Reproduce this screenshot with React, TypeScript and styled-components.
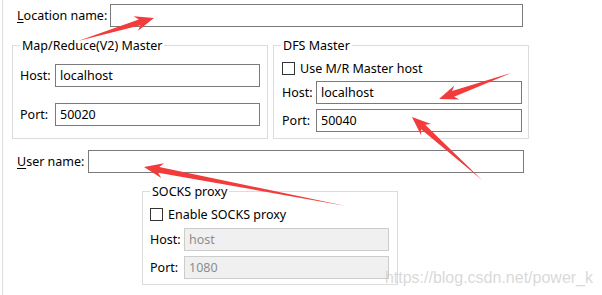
import React from 'react';
import styled, { createGlobalStyle } from "styled-components";

const GlobalStyle = createGlobalStyle`
  html, body { margin: 0; padding: 0; background: #fff; }
  body {
    font-family: "Noto Sans", "Open Sans", sans-serif;
    font-size: 12.5px;
    color: #000;
  }
`;

type Pt = [number, number];

// annotation arrow: thin tail widening into a notched head
function arrowPoints(tail: Pt, tip: Pt, head = 19, half = 7.5, shaft = 3) {
  const dx = tip[0] - tail[0];
  const dy = tip[1] - tail[1];
  const len = Math.hypot(dx, dy);
  const ux = dx / len, uy = dy / len;
  const nx = -uy, ny = ux;
  const at = (back: number, side: number): string =>
    `${(tip[0] - ux * back + nx * side).toFixed(1)},${(tip[1] - uy * back + ny * side).toFixed(1)}`;
  return [
    `${tail[0]},${tail[1]}`,
    at(head - 4, shaft),
    at(head, half),
    `${tip[0]},${tip[1]}`,
    at(head, -half),
    at(head - 4, -shaft),
  ].join(" ");
}

const arrows: { tail: Pt; tip: Pt }[] = [
  { tail: [78, 41], tip: [154, 18] },
  { tail: [511, 73], tip: [439, 99] },
  { tail: [482, 180], tip: [412, 117] },
  { tail: [346, 206], tip: [144, 167] },
];

function App() {
  return (
    <>
      <GlobalStyle />
      <Page>
        <Frame>
          <FieldRow $top={4}>
            <Label $w={93}><u>L</u>ocation name:</Label>
            <Input $w={413} />
          </FieldRow>

          <GroupRow>
            <Group>
              <Legend>Map/Reduce(V2) Master</Legend>
              <GroupBody $pad={7} $top={10} $gap={16}>
                <FieldRow>
                  <Label $w={35}>Host:</Label>
                  <Input $w={205} defaultValue="localhost" />
                </FieldRow>
                <FieldRow>
                  <Label $w={35}>Port:</Label>
                  <Input $w={205} defaultValue="50020" />
                </FieldRow>
              </GroupBody>
            </Group>
            <Group>
              <Legend>DFS Master</Legend>
              <GroupBody $pad={8} $top={8} $gap={5}>
                <CheckRow>
                  <Box />
                  <span>Use M/R Master host</span>
                </CheckRow>
                <FieldRow $top={1}>
                  <Label $w={34}>Host:</Label>
                  <Input $w={206} defaultValue="localhost" />
                </FieldRow>
                <FieldRow>
                  <Label $w={34}>Port:</Label>
                  <Input $w={206} defaultValue="50040" />
                </FieldRow>
              </GroupBody>
            </Group>
          </GroupRow>

          <FieldRow $top={11}>
            <Label $w={71}><u>U</u>ser name:</Label>
            <Input $w={436} />
          </FieldRow>

          <SocksRow>
            <Group>
              <Legend>SOCKS proxy</Legend>
              <GroupBody $pad={7} $top={8} $gap={5}>
                <CheckRow>
                  <Box />
                  <span>Enable SOCKS proxy</span>
                </CheckRow>
                <FieldRow $top={2}>
                  <Label $w={34}>Host:</Label>
                  <Input $w={205} $off defaultValue="host" disabled />
                </FieldRow>
                <FieldRow>
                  <Label $w={34}>Port:</Label>
                  <Input $w={205} $off defaultValue="1080" disabled />
                </FieldRow>
              </GroupBody>
            </Group>
          </SocksRow>
        </Frame>

        <Overlay width={602} height={295}>
          {arrows.map((a, i) => (
            <polygon key={i} points={arrowPoints(a.tail, a.tip)} fill="#f23c3c" />
          ))}
        </Overlay>
        <Watermark>https://blog.csdn.net/power_k</Watermark>
      </Page>
    </>
  );
}

export default App;

const Page = styled.div`
  position: relative;
  width: 602px;
  height: 295px;
  overflow: hidden;
`;

const Frame = styled.div`
  margin-left: 2px;
  height: 295px;
  border-left: 1px solid #dedede;
  padding-left: 14px;
  box-sizing: border-box;
  display: flex;
  flex-direction: column;
  align-items: flex-start;
`;

const FieldRow = styled.div<{ $top?: number }>`
  display: flex;
  align-items: center;
  margin-top: ${p => p.$top || 0}px;
`;

const Label = styled.label<{ $w: number }>`
  flex: 0 0 ${p => p.$w}px;
  line-height: 16px;
  white-space: nowrap;
  u { text-underline-offset: 2px; }
`;

const Input = styled.input<{ $w: number; $off?: boolean }>`
  width: ${p => p.$w}px;
  height: 23px;
  box-sizing: border-box;
  margin: 0;
  padding: 0 0 0 4px;
  border: 1px solid ${p => (p.$off ? "#cccccc" : "#7a7a7a")};
  background: ${p => (p.$off ? "#f0f0f0" : "#fff")};
  color: ${p => (p.$off ? "#8d8d8d" : "#000")};
  font: inherit;
  outline: none;
`;

const GroupRow = styled.div`
  display: flex;
  gap: 5px;
  margin-top: 18px;
  margin-left: -5px;
`;

const SocksRow = styled.div`
  margin-top: 18px;
  margin-left: 125px;
`;

const Group = styled.div`
  width: 256px;
  height: 94px;
  box-sizing: border-box;
  border: 1px solid #dcdcdc;
`;

const Legend = styled.div`
  width: fit-content;
  margin: -9px 0 0 7px;
  padding: 0 2px;
  line-height: 17px;
  background: #fff;
`;

const GroupBody = styled.div<{ $pad: number; $top: number; $gap: number }>`
  display: flex;
  flex-direction: column;
  gap: ${p => p.$gap}px;
  padding-left: ${p => p.$pad}px;
  margin-top: ${p => p.$top}px;
`;

const CheckRow = styled.div`
  display: flex;
  align-items: center;
  gap: 5px;
  height: 13px;
`;

const Box = styled.span`
  width: 13px;
  height: 13px;
  box-sizing: border-box;
  border: 1px solid #333;
  background: #fff;
`;

const Overlay = styled.svg`
  position: absolute;
  left: 0;
  top: 0;
  pointer-events: none;
`;

const Watermark = styled.div`
  position: absolute;
  right: 9px;
  bottom: 8px;
  font-family: "Liberation Sans", Arial, sans-serif;
  font-size: 16px;
  color: rgba(200, 200, 200, 0.7);
  pointer-events: none;
`;
